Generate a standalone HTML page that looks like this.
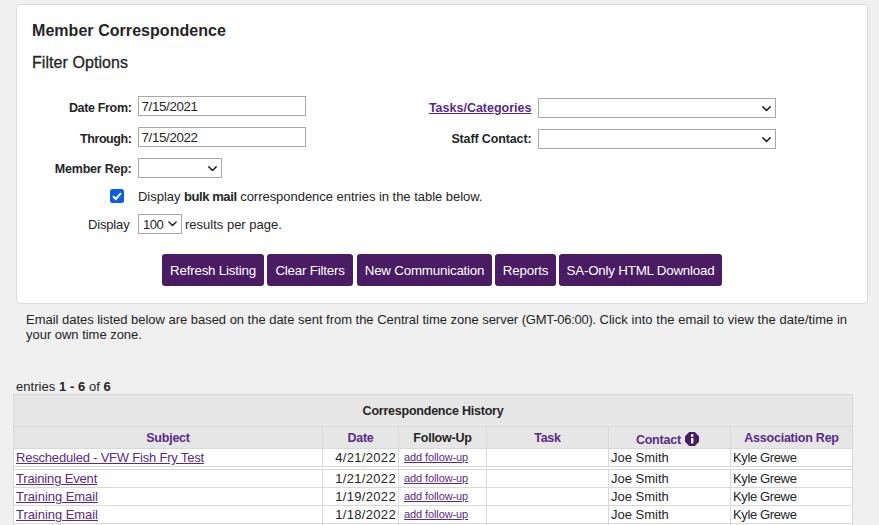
<!DOCTYPE html>
<html lang="en">
<head>
<meta charset="utf-8">
<title>Member Correspondence</title>
<style>
*{box-sizing:border-box;}
html,body{margin:0;padding:0;}
body{background:#f0f0f0;font-family:"Liberation Sans",Arial,sans-serif;font-size:13px;color:#252525;width:879px;height:525px;overflow:hidden;position:relative;}
a{color:#5b2a86;text-decoration:underline;}
.panel{position:absolute;left:16px;top:4px;width:852px;height:300px;background:#fff;border:1px solid #dbdbdb;border-radius:4px;}
h1{position:absolute;left:32px;top:21px;margin:0;font-size:16px;font-weight:bold;line-height:19px;color:#252525;letter-spacing:0.05px;white-space:nowrap;}
h2{position:absolute;left:32px;top:53px;margin:0;font-size:16px;font-weight:normal;line-height:19px;color:#252525;letter-spacing:0.07px;-webkit-text-stroke:0.3px #252525;white-space:nowrap;}
.lbl{position:absolute;font-weight:bold;font-size:12.5px;line-height:15px;text-align:right;white-space:nowrap;color:#252525;}
.inp{position:absolute;height:20px;border:1px solid #a8a8a8;background:#fff;font-family:"Liberation Sans",Arial,sans-serif;font-size:13.333px;line-height:16px;padding:2px 3px 0 2.5px;letter-spacing:-0.35px;color:#252525;white-space:nowrap;}
.sel{position:absolute;height:20px;border:1px solid #a8a8a8;background:#fff;font-family:"Liberation Sans",Arial,sans-serif;font-size:13px;line-height:16px;padding:1px 4px;color:#252525;white-space:nowrap;}
.sel svg{position:absolute;right:4.5px;top:6.6px;}
.txt{position:absolute;font-size:13px;line-height:15px;white-space:nowrap;color:#252525;}
.txt b{letter-spacing:-0.42px;}
.cb{position:absolute;left:110px;top:189px;width:14px;height:14px;background:#0b5fe0;border-radius:2.5px;}
.cb svg{position:absolute;left:0;top:0;}
.btn{position:absolute;top:254px;height:32px;background:#4a1c64;color:#fff;border-radius:3px;font-family:"Liberation Sans",Arial,sans-serif;font-size:13.333px;line-height:33px;text-align:center;white-space:nowrap;letter-spacing:-0.2px;}
.note{position:absolute;left:26px;top:312px;letter-spacing:-0.025px;font-size:13px;line-height:15px;color:#252525;white-space:nowrap;}
.entries{position:absolute;left:16px;top:379px;font-size:13px;line-height:15px;color:#252525;white-space:nowrap;}
.entries{letter-spacing:0.05px;}
table{position:absolute;left:13px;top:394px;border-collapse:collapse;table-layout:fixed;width:839px;font-size:13px;}
td,th{border:1px solid #d9d9d9;padding:0 2px;height:18px;line-height:17px;white-space:nowrap;overflow:hidden;background:#fff;text-align:left;font-weight:normal;color:#252525;}
th{background:#e6e6e6;font-weight:bold;text-align:center;font-size:12.5px;letter-spacing:-0.23px;}
th.p{color:#5b2a86;}
tr.h1 th{height:32px;padding-top:2px;}
tr.h2 th{height:22px;line-height:20px;}
td.r{text-align:right;letter-spacing:0.33px;padding-right:2px;}
td.s{font-size:11px;padding-left:5px;letter-spacing:-0.1px;}
td.k{letter-spacing:-0.37px;}
tr.gap td{height:3px;line-height:0;padding:0;}
.info{display:inline-block;vertical-align:-4px;margin-left:1px;}
</style>
</head>
<body>
<div class="panel"></div>
<h1>Member Correspondence</h1>
<h2>Filter Options</h2>

<div class="lbl" style="right:747.5px;top:101px;letter-spacing:-0.34px;">Date From:</div>
<div class="inp" style="left:138px;top:96px;width:168px;">7/15/2021</div>
<div class="lbl" style="right:747.5px;top:132px;letter-spacing:-0.42px;">Through:</div>
<div class="inp" style="left:138px;top:127px;width:168px;">7/15/2022</div>
<div class="lbl" style="right:747.5px;top:162px;letter-spacing:-0.23px;">Member Rep:</div>
<div class="sel" style="left:138px;top:158px;width:84px;"><svg width="9" height="6" viewBox="0 0 9 6"><path d="M0.9 0.9 L4.5 4.5 L8.1 0.9" fill="none" stroke="#222" stroke-width="1.5" stroke-linecap="round" stroke-linejoin="round"/></svg></div>

<div class="lbl" style="right:347.5px;top:101px;"><a href="#">Tasks/Categories</a></div>
<div class="sel" style="left:538px;top:98px;width:238px;"><svg width="9" height="6" viewBox="0 0 9 6"><path d="M0.9 0.9 L4.5 4.5 L8.1 0.9" fill="none" stroke="#222" stroke-width="1.5" stroke-linecap="round" stroke-linejoin="round"/></svg></div>
<div class="lbl" style="right:347.5px;top:132px;letter-spacing:-0.13px;">Staff Contact:</div>
<div class="sel" style="left:538px;top:129px;width:238px;"><svg width="9" height="6" viewBox="0 0 9 6"><path d="M0.9 0.9 L4.5 4.5 L8.1 0.9" fill="none" stroke="#222" stroke-width="1.5" stroke-linecap="round" stroke-linejoin="round"/></svg></div>

<div class="cb"><svg width="14" height="14" viewBox="0 0 14 14"><path d="M3 7.2 L5.8 10 L11 4.2" fill="none" stroke="#fff" stroke-width="2"/></svg></div>
<div class="txt" style="left:138px;top:189px;letter-spacing:-0.03px;">Display <b>bulk mail</b> correspondence entries in the table below.</div>
<div class="txt" style="right:749.5px;top:217px;letter-spacing:-0.15px;">Display</div>
<div class="sel" style="left:138px;top:214px;width:44px;padding-top:2px;letter-spacing:-0.5px;">100<svg width="9" height="6" viewBox="0 0 9 6" style="right:4.2px;top:6.4px;"><path d="M0.9 0.9 L4.5 4.5 L8.1 0.9" fill="none" stroke="#222" stroke-width="1.4" stroke-linecap="round" stroke-linejoin="round"/></svg></div>
<div class="txt" style="left:185px;top:217px;">results per page.</div>

<div class="btn" style="left:162px;width:102px;">Refresh Listing</div>
<div class="btn" style="left:267px;width:86px;">Clear Filters</div>
<div class="btn" style="left:357px;width:135px;">New Communication</div>
<div class="btn" style="left:495px;width:61px;">Reports</div>
<div class="btn" style="left:559px;width:163px;">SA-Only HTML Download</div>

<div class="note">Email dates listed below are based on the date sent from the Central time zone server <span style="letter-spacing:-0.27px">(GMT-06:00).</span><span style="letter-spacing:0.045px"> Click into the email to view the date/time in</span><br>your own time zone.</div>
<div class="entries">entries <b>1 - 6</b> of <b>6</b></div>

<table>
<colgroup><col style="width:309px"><col style="width:76px"><col style="width:88px"><col style="width:122px"><col style="width:122px"><col style="width:122px"></colgroup>
<tr class="h1"><th colspan="6">Correspondence History</th></tr>
<tr class="h2"><th class="p">Subject</th><th class="p">Date</th><th>Follow-Up</th><th class="p">Task</th><th class="p" style="padding-right:6px"><span style="position:relative;top:2px">Contact</span> <svg class="info" width="14" height="14" viewBox="0 0 14 14"><polygon points="4.2,0 9.8,0 14,4.2 14,9.8 9.8,14 4.2,14 0,9.8 0,4.2" fill="#4a1c64"/><rect x="6" y="6" width="2.4" height="5.5" fill="#fff"/><rect x="6" y="2.2" width="2.4" height="2.6" fill="#fff"/></svg></th><th class="p">Association Rep</th></tr>
<tr><td style="letter-spacing:-0.2px"><a href="#">Rescheduled - VFW Fish Fry Test</a></td><td class="r">4/21/2022</td><td class="s"><a href="#">add follow-up</a></td><td></td><td>Joe Smith</td><td class="k">Kyle Grewe</td></tr>
<tr class="gap"><td colspan="6"></td></tr>
<tr><td style="letter-spacing:-0.16px"><a href="#">Training Event</a></td><td class="r">1/21/2022</td><td class="s"><a href="#">add follow-up</a></td><td></td><td>Joe Smith</td><td class="k">Kyle Grewe</td></tr>
<tr><td style="letter-spacing:-0.05px"><a href="#">Training Email</a></td><td class="r">1/19/2022</td><td class="s"><a href="#">add follow-up</a></td><td></td><td>Joe Smith</td><td class="k">Kyle Grewe</td></tr>
<tr><td style="letter-spacing:-0.05px"><a href="#">Training Email</a></td><td class="r">1/18/2022</td><td class="s"><a href="#">add follow-up</a></td><td></td><td>Joe Smith</td><td class="k">Kyle Grewe</td></tr>
<tr><td style="letter-spacing:-0.05px"><a href="#">Training Email</a></td><td class="r">1/18/2022</td><td class="s"><a href="#">add follow-up</a></td><td></td><td>Joe Smith</td><td class="k">Kyle Grewe</td></tr>
</table>
</body>
</html>
